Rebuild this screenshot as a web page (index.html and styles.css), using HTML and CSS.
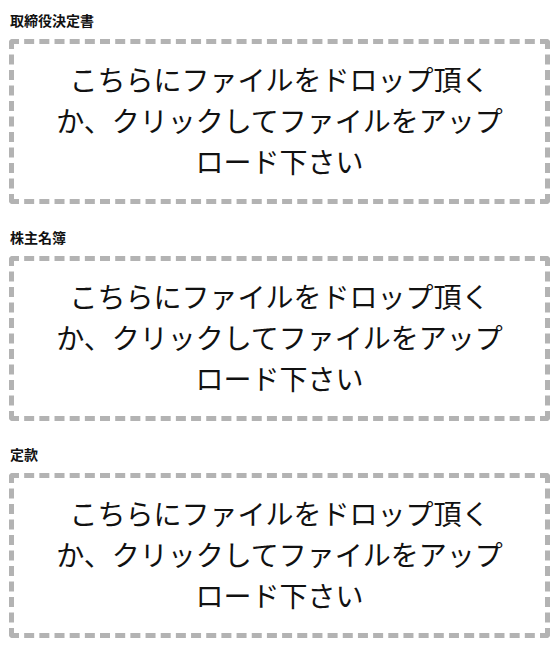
FILE: index.html
```html
<!DOCTYPE html>
<html lang="ja">
<head>
<meta charset="utf-8">
<title>Upload</title>
<link rel="stylesheet" href="styles.css">
</head>
<body>
<div class="page">
  <section class="field">
    <div class="label">取締役決定書</div>
    <div class="dropzone">こちらにファイルをドロップ頂くか、クリックしてファイルをアップロード下さい</div>
  </section>
  <section class="field">
    <div class="label">株主名簿</div>
    <div class="dropzone">こちらにファイルをドロップ頂くか、クリックしてファイルをアップロード下さい</div>
  </section>
  <section class="field">
    <div class="label">定款</div>
    <div class="dropzone">こちらにファイルをドロップ頂くか、クリックしてファイルをアップロード下さい</div>
  </section>
</div>
</body>
</html>
```
FILE: styles.css
```css
html, body {
  margin: 0;
  padding: 0;
  background: #ffffff;
}
body {
  font-family: "Noto Sans CJK JP", "Noto Sans", sans-serif;
  color: #111111;
}
.page {
  padding: 11px 5px 0 9px;
  display: flex;
  flex-direction: column;
  gap: 24px;
}
.field {
  display: flex;
  flex-direction: column;
  gap: 9px;
}
.label {
  font-size: 14px;
  font-weight: 700;
  line-height: 19px;
  padding-left: 1px;
  color: #111111;
}
.dropzone {
  border: 5px dashed #b3b3b3;
  border-radius: 4px;
  box-sizing: border-box;
  height: 165px;
  padding: 0 35px 3px;
  display: flex;
  align-items: center;
  justify-content: center;
  text-align: center;
  font-size: 28px;
  line-height: 41px;
  color: #111111;
  line-break: strict;
}
```
